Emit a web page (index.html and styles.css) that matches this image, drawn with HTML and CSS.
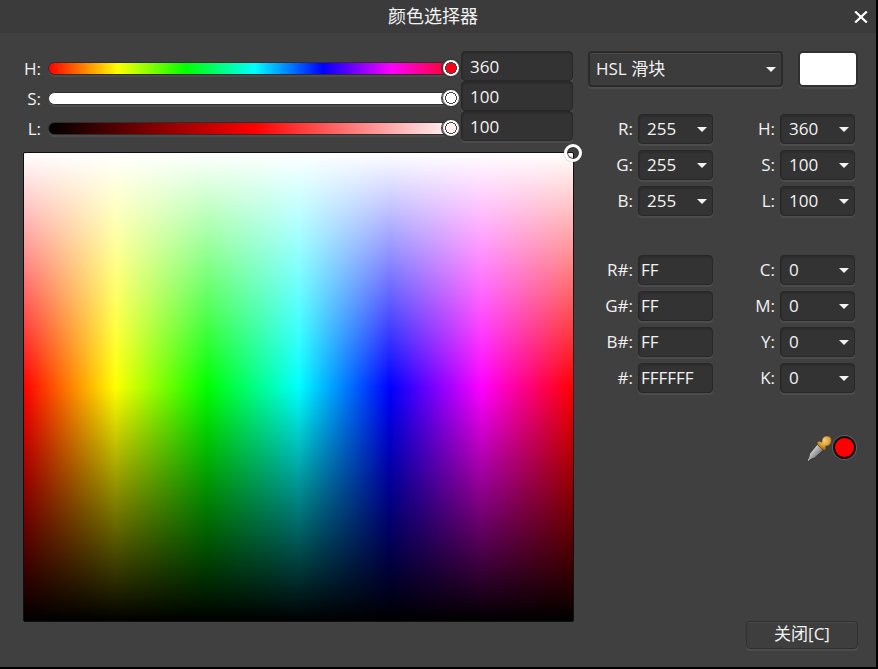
FILE: index.html
```html
<!DOCTYPE html>
<html lang="zh-CN">
<head>
<meta charset="utf-8">
<title>颜色选择器</title>
<link rel="stylesheet" href="styles.css">
</head>
<body>
<div class="window">
  <header class="titlebar">
    <h1>颜色选择器</h1>
    <button class="close-x" type="button" aria-label="关闭">
      <svg width="14" height="12" viewBox="0 0 14 12"><path d="M1.200.5 12.800 11.500M12.800.5 1.200 11.500" stroke="#fff" stroke-width="2.200" fill="none"/></svg>
    </button>
  </header>
  <main class="content">
    <section class="picker">
      <div class="slider-row">
        <label for="hue">H:</label>
        <input class="slider hue" id="hue" type="range" min="0" max="360" value="360">
        <input class="field" type="text" value="360" aria-label="H">
      </div>
      <div class="slider-row">
        <label for="sat">S:</label>
        <input class="slider sat" id="sat" type="range" min="0" max="100" value="100">
        <input class="field" type="text" value="100" aria-label="S">
      </div>
      <div class="slider-row">
        <label for="lig">L:</label>
        <input class="slider lig" id="lig" type="range" min="0" max="100" value="100">
        <input class="field" type="text" value="100" aria-label="L">
      </div>
      <div class="spectrum"><span class="marker"></span></div>
    </section>
    <section class="side">
      <div class="mode-row">
        <span class="drop mode"><select aria-label="模式"><option>HSL 滑块</option></select></span>
        <span class="swatch"></span>
      </div>
      <div class="values">
        <label for="r">R:</label><span class="drop"><select id="r"><option>255</option></select></span>
        <label for="h">H:</label><span class="drop"><select id="h"><option>360</option></select></span>
        <label for="g">G:</label><span class="drop"><select id="g"><option>255</option></select></span>
        <label for="s">S:</label><span class="drop"><select id="s"><option>100</option></select></span>
        <label for="b">B:</label><span class="drop"><select id="b"><option>255</option></select></span>
        <label for="l">L:</label><span class="drop"><select id="l"><option>100</option></select></span>
      </div>
      <div class="values second">
        <label for="rx">R#:</label><input class="field hex" id="rx" type="text" value="FF">
        <label for="c">C:</label><span class="drop"><select id="c"><option>0</option></select></span>
        <label for="gx">G#:</label><input class="field hex" id="gx" type="text" value="FF">
        <label for="m">M:</label><span class="drop"><select id="m"><option>0</option></select></span>
        <label for="bx">B#:</label><input class="field hex" id="bx" type="text" value="FF">
        <label for="y">Y:</label><span class="drop"><select id="y"><option>0</option></select></span>
        <label for="hx">#:</label><input class="field hex" id="hx" type="text" value="FFFFFF">
        <label for="k">K:</label><span class="drop"><select id="k"><option>0</option></select></span>
      </div>
      <div class="pick-row">
        <button class="dropper" type="button" aria-label="拾取颜色">
          <svg width="28" height="28" viewBox="0 0 28 28">
            <defs>
              <linearGradient id="metal" x1="0" y1="0" x2="1" y2="1"><stop offset=".25" stop-color="#dcdcdc"/><stop offset=".5" stop-color="#a8a8a8"/><stop offset=".75" stop-color="#666"/></linearGradient>
              <radialGradient id="bulb" cx=".5" cy=".3" r=".7"><stop offset="0" stop-color="#f6cf7c"/><stop offset=".5" stop-color="#dba23c"/><stop offset="1" stop-color="#8a5a12"/></radialGradient>
            </defs>
            <path d="M12.500 10 18.500 16 9.500 24 5.500 25.500 3.500 27.500 2 26 3.500 24 4.700 19.500Z" fill="url(#metal)" stroke="#2b2b2b" stroke-width=".8"/>
            <path d="M12 7.800 14.500 7.200 17 8.200C16.500 5 18.500 2 22 2 25 2 26.800 4 26.500 7 26 10.500 23.500 12.300 20.800 12.200L21 14.600 19.800 16.500 17.500 15.800 12.500 10.800Z" fill="url(#bulb)" stroke="#553c14" stroke-width=".6"/>
          </svg>
        </button>
        <button class="picked" type="button" aria-label="已拾取的颜色"></button>
      </div>
      <button class="close" type="button">关闭[C]</button>
    </section>
  </main>
</div>
</body>
</html>
```
FILE: styles.css
```css
* { box-sizing: border-box; }

body {
  margin: 0;
  background: #000;
  color: #f2f2f2;
  font: 17px/24px "Open Sans", "Noto Sans CJK SC", sans-serif;
}

input, select, button { font: inherit; color: inherit; margin: 0; }

.window {
  display: flex;
  flex-direction: column;
  min-height: 100vh;
  background: #404040;
  border: solid #000;
  border-width: 0 2px 2px 0;
}

.titlebar {
  position: relative;
  display: flex;
  align-items: center;
  justify-content: center;
  height: 33px;
  background: #3b3b3b;
}

.titlebar h1 {
  margin: 0;
  padding: 0 10px 2px 0;
  font-size: 18px;
  font-weight: 400;
}

.close-x {
  position: absolute;
  right: 8px;
  top: 11px;
  display: flex;
  padding: 0;
  border: 0;
  background: none;
}

.content {
  flex: 1;
  display: grid;
  grid-template-columns: 1fr 270px;
  gap: 14px;
  padding: 18px 18px 18px 23px;
}

.picker { display: flex; flex-direction: column; }

.slider-row {
  display: grid;
  grid-template-columns: 18px 1fr 112px;
  align-items: center;
  height: 30px;
  padding-right: 1px;
}

.slider-row label { text-align: right; padding-top: 6px; }

.field, .drop {
  width: 100%;
  height: 30px;
  min-width: 0;
  border: 1px solid #282828;
  border-radius: 4px;
  background: #333;
  box-shadow: inset 1px 2px 1px #2d2d2d, 0 2px 0 #4c4c4c;
}

.field { padding: 0 8px; outline: 0; }
.hex { padding: 0 2px 2px; }

.slider {
  appearance: none;
  width: auto;
  height: 20px;
  margin: 4px 0 0 7px;
  background: none;
}

.slider::-webkit-slider-runnable-track {
  height: 13px;
  border: 1px solid #2e2e2e;
  border-radius: 7px;
  box-shadow: 0 2px 0 #4c4c4c;
}

.slider::-webkit-slider-thumb {
  appearance: none;
  width: 18px;
  height: 18px;
  margin-top: -4px;
  border: 1px solid #3a3a3a;
  border-radius: 50%;
  background: radial-gradient(circle, var(--thumb) 0 5px, #444 5px 6px, #fff 6px);
  box-shadow: 0 0 0 1px #3a3a3a;
}

.hue { --thumb: #ff0018; }
.hue::-webkit-slider-runnable-track { background: linear-gradient(to right, #f00, #ff0, #0f0, #0ff, #00f, #f0f, #f00); }
.sat { --thumb: #fff; }
.sat::-webkit-slider-runnable-track { background: #fff; }
.lig { --thumb: #fff0f0; }
.lig::-webkit-slider-runnable-track { background: linear-gradient(to right, #000, #f00 50%, #fff); }

.spectrum {
  position: relative;
  flex: 1;
  margin: 11px 0 27px;
  border: 1px solid #101010;
  border-radius: 2px;
  background:
    linear-gradient(to bottom, #fff, rgba(255, 255, 255, 0) 50%, rgba(0, 0, 0, 0) 50%, #000),
    linear-gradient(to right, #f00, #ff0, #0f0, #0ff, #00f, #f0f, #f00);
}

.marker {
  position: absolute;
  top: -9px;
  right: -9px;
  width: 18px;
  height: 18px;
  border: 3px solid #fff;
  border-radius: 50%;
  box-shadow: 0 0 1px #555, inset 0 0 1px 1px #333;
}

.side { display: flex; flex-direction: column; }

.mode-row { display: flex; gap: 15px; }

.drop { position: relative; display: block; }

.drop select {
  appearance: none;
  display: block;
  width: 100%;
  height: 100%;
  padding: 0 8px;
  border: 0;
  background: none;
}

.drop::after {
  content: "";
  position: absolute;
  right: 5px;
  top: 50%;
  margin-top: -2px;
  border: solid transparent;
  border-width: 5px 5px 0;
  border-top-color: #f2f2f2;
  pointer-events: none;
}

.mode {
  flex: 1;
  height: 36px;
  background: #3c3c3c;
  border: 2px solid #2b2b2b;
  box-shadow: inset 0 1px 0 #4a4a4a, 0 2px 0 #4c4c4c;
}

.mode select { padding: 0 6px; }

.swatch {
  width: 60px;
  height: 36px;
  border: 2px solid #303030;
  border-radius: 5px;
  background: #fff;
  box-shadow: 0 2px 0 #4c4c4c;
}

.values {
  display: grid;
  grid-template-columns: 45px 75px 57px 75px;
  column-gap: 5px;
  row-gap: 6px;
  align-items: center;
  margin-top: 27px;
}

.values label { text-align: right; }
.second { margin-top: 39px; }

.pick-row {
  display: flex;
  justify-content: flex-end;
  align-items: center;
  margin-top: 41px;
}

.dropper { display: flex; padding: 0; border: 0; background: none; }

.picked {
  width: 23px;
  height: 23px;
  padding: 0;
  margin: 0 2px 2px 0;
  border: 2px solid #111;
  border-radius: 50%;
  background: #f00;
  box-shadow: 0 0 0 1px #606060;
}

.close {
  align-self: flex-end;
  width: 112px;
  height: 28px;
  margin-top: auto;
  padding: 0 0 2px;
  border: 1px solid #303030;
  border-radius: 4px;
  background: #3e3e3e;
  box-shadow: inset 0 1px 0 #4a4a4a, 0 2px 0 #4c4c4c;
}
```
